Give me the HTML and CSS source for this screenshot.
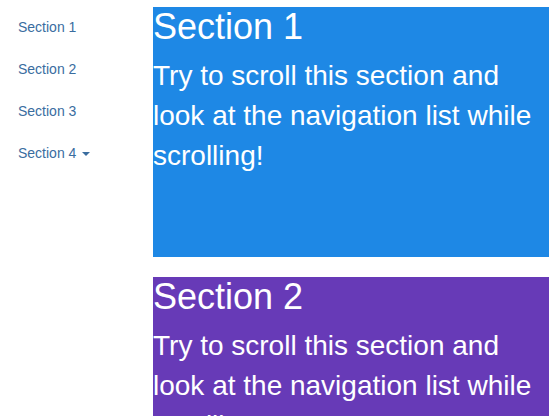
FILE: index.html
```html
<!DOCTYPE html>
<html lang="en">
<head>
  <meta charset="UTF-8">
  <title>Scrollspy</title>
  <link rel="stylesheet" href="styles.css">
</head>
<body>

  <div class="page">
    <nav class="sidenav">
      <ul class="pills">
        <li><a href="#section1">Section 1</a></li>
        <li><a href="#section2">Section 2</a></li>
        <li><a href="#section3">Section 3</a></li>
        <li><a href="#section4">Section 4 <span class="caret"></span></a></li>
      </ul>
    </nav>

    <div class="content">
      <div id="section1" class="section blue">
        <h1>Section 1</h1>
        <p>Try to scroll this section and look at the navigation list while scrolling!</p>
      </div>
      <div id="section2" class="section purple">
        <h1>Section 2</h1>
        <p>Try to scroll this section and look at the navigation list while scrolling!</p>
      </div>
      <div id="section3" class="section teal">
        <h1>Section 3</h1>
        <p>Try to scroll this section and look at the navigation list while scrolling!</p>
      </div>
      <div id="section4" class="section orange">
        <h1>Section 4</h1>
        <p>Try to scroll this section and look at the navigation list while scrolling!</p>
      </div>
    </div>
  </div>

</body>
</html>
```

FILE: styles.css
```css
html, body {
  height: 100%;
}

body {
  margin: 0;
  overflow: hidden;
  font-family: "Liberation Sans", Arial, sans-serif;
  background: #fff;
}

.page {
  display: flex;
  align-items: flex-start;
  padding-top: 7px;
}

.sidenav {
  width: 150px;
  padding-left: 3px;
  flex-shrink: 0;
}

.pills {
  list-style: none;
  margin: 0;
  padding: 0;
}

.pills li + li {
  margin-top: 2px;
}

.pills a {
  display: block;
  padding: 10px 15px;
  font-size: 14px;
  line-height: 20px;
  color: #3a6d9f;
  text-decoration: none;
}

.caret {
  display: inline-block;
  width: 0;
  height: 0;
  margin-left: 2px;
  vertical-align: middle;
  border-top: 4px solid;
  border-left: 4px solid transparent;
  border-right: 4px solid transparent;
}

.content {
  flex: 1;
}

.section {
  color: #fff;
  height: 250px;
  margin-bottom: 20px;
}

.section h1 {
  margin: 0 0 9px;
  font-size: 36px;
  font-weight: normal;
  line-height: 1.1;
}

.section p {
  margin: 0;
  font-size: 28px;
  line-height: 40px;
}

.blue {
  background: #1e88e5;
}

.purple {
  background: #673ab7;
}

.teal {
  background: #009688;
}

.orange {
  background: #ff9800;
}
```
